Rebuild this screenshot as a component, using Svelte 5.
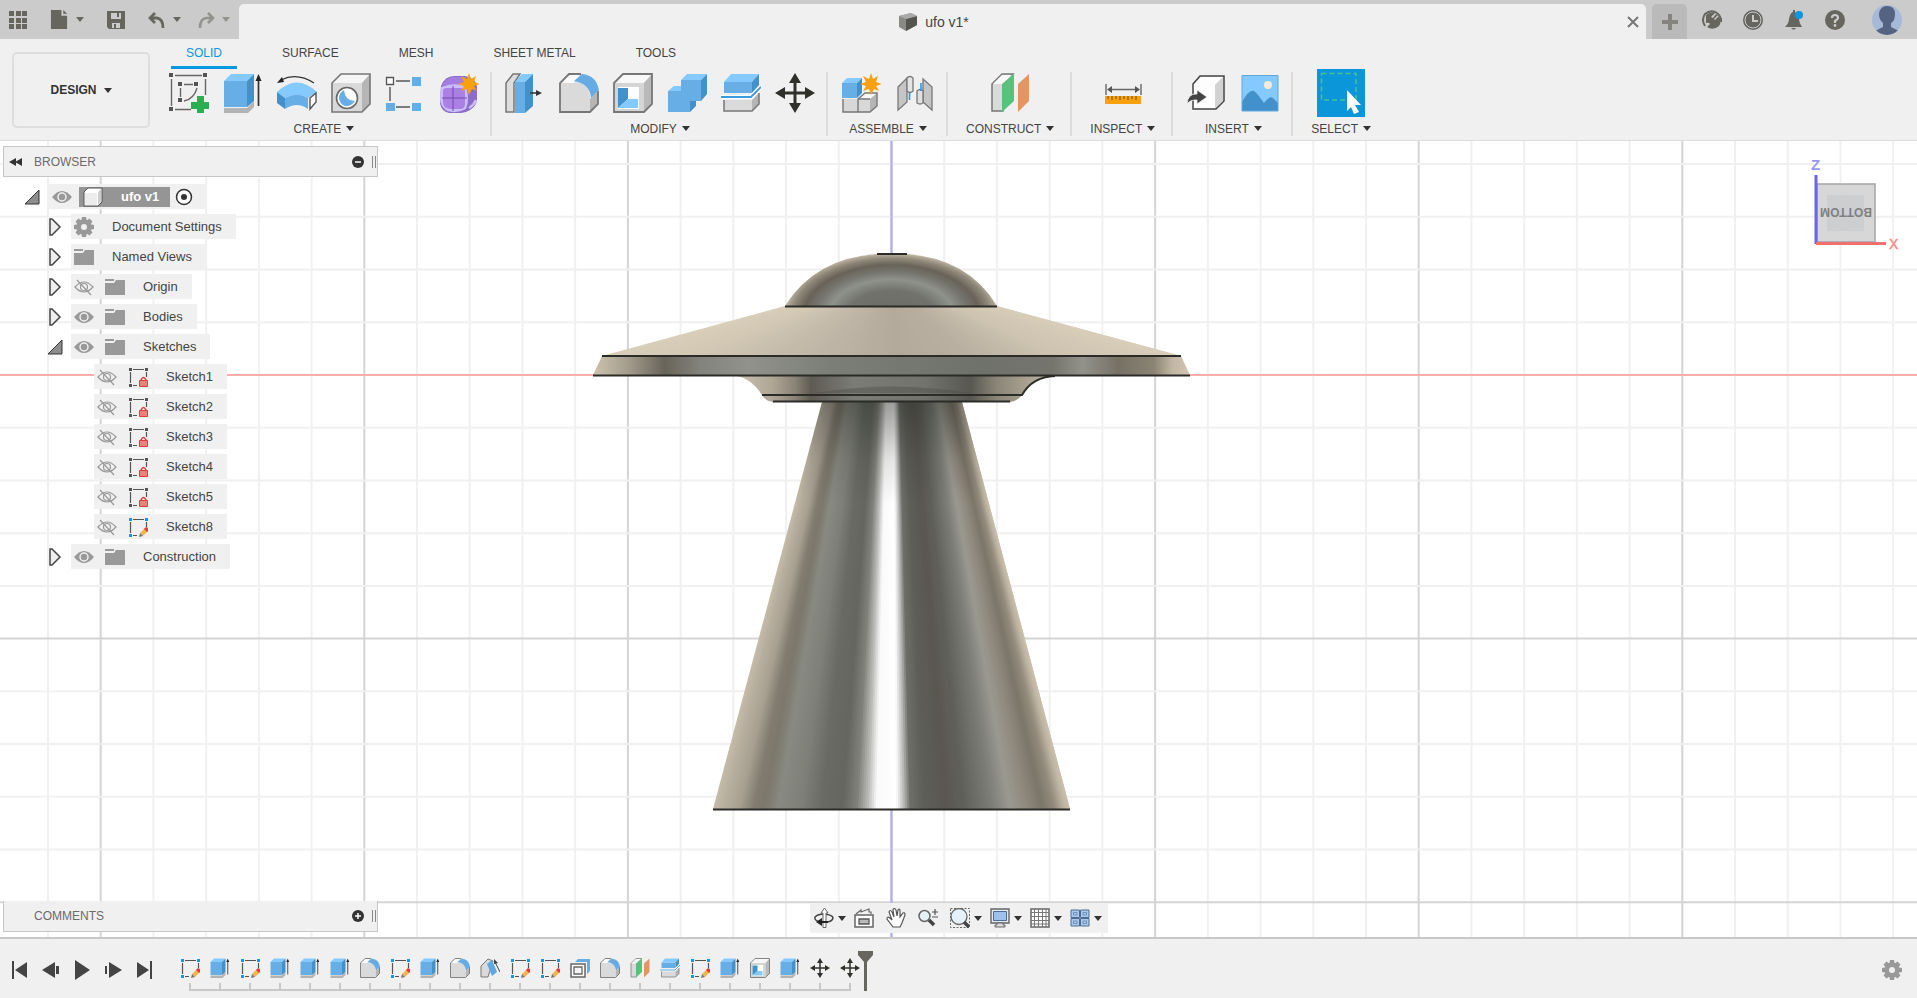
<script lang="ts">
	type Node = { label: string; depth: number; icon: string; open?: boolean; visible?: boolean };
	type Stop = [number, number, number, number];

	const tabs = ['SOLID', 'SURFACE', 'MESH', 'SHEET METAL', 'TOOLS'];
	let activeTab = $state('SOLID');

	const groups = [
		{ label: 'CREATE', tools: ['sketch', 'extrude', 'revolve', 'hole', 'pattern', 'form'] },
		{ label: 'MODIFY', tools: ['presspull', 'fillet', 'shell', 'combine', 'split', 'move'] },
		{ label: 'ASSEMBLE', tools: ['component', 'joint'] },
		{ label: 'CONSTRUCT', tools: ['plane'] },
		{ label: 'INSPECT', tools: ['measure'] },
		{ label: 'INSERT', tools: ['derive', 'canvas'] },
		{ label: 'SELECT', tools: ['select'] }
	];

	let nodes: Node[] = $state([
		{ label: 'Document Settings', depth: 1, icon: 'gear', open: false },
		{ label: 'Named Views', depth: 1, icon: 'folder', open: false },
		{ label: 'Origin', depth: 1, icon: 'folder', open: false, visible: false },
		{ label: 'Bodies', depth: 1, icon: 'folder', open: false, visible: true },
		{ label: 'Sketches', depth: 1, icon: 'folder', open: true, visible: true },
		{ label: 'Sketch1', depth: 2, icon: 'sketch-locked', visible: false },
		{ label: 'Sketch2', depth: 2, icon: 'sketch-locked', visible: false },
		{ label: 'Sketch3', depth: 2, icon: 'sketch-locked', visible: false },
		{ label: 'Sketch4', depth: 2, icon: 'sketch-locked', visible: false },
		{ label: 'Sketch5', depth: 2, icon: 'sketch-locked', visible: false },
		{ label: 'Sketch8', depth: 2, icon: 'sketch-edit', visible: false },
		{ label: 'Construction', depth: 1, icon: 'folder', open: false, visible: true }
	]);

	const features = [
		'sketch-edit', 'extrude', 'sketch-edit', 'extrude', 'extrude', 'extrude', 'fillet',
		'sketch-edit', 'extrude', 'fillet', 'draft', 'sketch-edit', 'sketch-edit', 'offset',
		'fillet', 'plane', 'split', 'sketch-edit', 'extrude', 'shell', 'extrude', 'move', 'move'
	];

	const player = ['first', 'prev', 'play', 'next', 'last'];

	const views = [
		{ id: 'orbit', menu: true },
		{ id: 'look', menu: false },
		{ id: 'pan', menu: false },
		{ id: 'zoom', menu: false },
		{ id: 'fit', menu: true },
		{ id: 'display', menu: true },
		{ id: 'grid', menu: true },
		{ id: 'viewports', menu: true }
	];

	// grid lines, every fifth one is major
	const cell = 52.72;
	const axisX = 891.5;
	const axisY = 375;
	const columns = Array.from({ length: 37 }, (_, i) => i - 17);
	const rows = Array.from({ length: 16 }, (_, i) => i - 5);

	// shading across each cone, left to right
	const beamStops: Stop[] = [
		[0, 196, 186, 168], [0.03, 182, 173, 158], [0.07, 168, 160, 146], [0.11, 130, 124, 112],
		[0.14, 124, 120, 108], [0.18, 136, 138, 130], [0.24, 127, 129, 121], [0.3, 105, 107, 100],
		[0.36, 101, 102, 96], [0.4, 128, 129, 122], [0.43, 185, 185, 184], [0.455, 250, 250, 250],
		[0.51, 255, 255, 255], [0.53, 190, 190, 190], [0.55, 109, 110, 104], [0.59, 94, 94, 89],
		[0.65, 90, 87, 81], [0.7, 96, 96, 91], [0.78, 124, 126, 119], [0.83, 154, 153, 146],
		[0.87, 145, 140, 127], [0.92, 123, 118, 105], [0.955, 148, 140, 126], [0.98, 188, 178, 160],
		[1, 205, 196, 176]
	];
	const discStops: Stop[] = [
		[0, 216, 206, 186], [0.15, 210, 200, 180], [0.35, 192, 183, 168], [0.5, 179, 170, 156],
		[0.62, 184, 175, 161], [0.78, 205, 195, 176], [1, 216, 206, 186]
	];

	function shade(stops: Stop[], t: number) {
		const i = Math.max(1, stops.findIndex((s) => s[0] >= t));
		const a = stops[i - 1];
		const b = stops[i];
		const k = (t - a[0]) / (b[0] - a[0]);
		const c = [1, 2, 3].map((n) => Math.round(a[n] + (b[n] - a[n]) * k));
		return `rgb(${c.join(',')})`;
	}

	// thin slices of a cone seen from the side; each one runs a little under the next
	function cone(stops: Stop[], top: number[], bottom: number[], count: number) {
		const at = (range: number[], t: number) => range[0] + (range[1] - range[0]) * t;
		return Array.from({ length: count }, (_, i) => {
			const t = i / count;
			const u = Math.min(1, (i + 2) / count);
			return {
				points: `${at(top, t)},${top[2]} ${at(top, u)},${top[2]} ${at(bottom, u)},${bottom[2]} ${at(bottom, t)},${bottom[2]}`,
				fill: shade(stops, t)
			};
		});
	}

	const beam = cone(beamStops, [822, 962, 402], [713, 1070, 809], 160);
	const disc = cone(discStops, [785, 997, 306], [602, 1181, 356], 100);
</script>

{#snippet icon(id: string, size: number)}
	<svg width={size} height={size} aria-hidden="true"><use href="#{id}" /></svg>
{/snippet}

{#snippet cube(front: string, top: string, side: string)}
	<path d="M1 10H31V39H1Z" fill={front} />
	<path d="M1 10L10 1H39L31 10Z" fill={top} />
	<path d="M31 10L39 1V31L31 39Z" fill={side} />
{/snippet}

{#snippet star()}
	<path d="M30 0l2 6 5-3-2 6 6 2-6 2 3 5-5-2-3 6-2-6-6 2 3-5-6-2 6-2-3-6 6 3z" fill="#f7a10d" />
{/snippet}

{#snippet frame()}
	<path d="M5 2.500H16M2.500 5V16M18.500 5V10M5 18.500H9" stroke="#555" stroke-width="1.200" fill="none" />
{/snippet}

<svg class="sprite" aria-hidden="true">
	<defs>
		<symbol id="sketch" viewBox="0 0 40 40">
			<path d="M6 2.500H33M2.500 6V33M6 36.500H22M36.500 6V22M15 11.500H24M11.500 15V24M28 15Q25 26 15 28" fill="none" stroke="#666" stroke-width="1.400" />
			<path d="M0 0h4v4H0zM34 0h4v4h-4zM0 34h4v4H0zM9 9h4v4H9zM25 9h4v4h-4zM9 25h4v4H9z" fill="#555" />
			<path d="M28 23h7v6h6v7h-6v5h-7v-5h-6v-7h6z" fill="#29ae52" />
		</symbol>
		<symbol id="extrude" viewBox="0 0 40 40">
			<path d="M1 35H24L31 28V34L25 40H1Z" fill="#b3b3b3" />
			<path d="M1 8H24V34H1Z" fill="#68aee6" />
			<path d="M1 8L8 1H31L24 8Z" fill="#84c9ff" />
			<path d="M24 8L31 1V28L24 34Z" fill="#4391cb" />
			<path d="M35.500 33V6" stroke="#333" stroke-width="1.700" />
			<path d="M35.500 1L38.500 8H32.500Z" fill="#222" />
		</symbol>
		<symbol id="revolve" viewBox="0 0 40 40">
			<path d="M0 19Q20 0 40 19L31 25Q20 18 8 25Z" fill="#84c9ff" />
			<path d="M8 25Q20 18 31 25V36Q20 28 8 36Z" fill="#68aee6" />
			<path d="M0 19L8 25V36L0 30Z" fill="#4391cb" />
			<path d="M33 25L39 20V29L33 36Z" fill="#fff" stroke="#555" stroke-width="1.400" />
			<path d="M37 10Q20-1 4 7" fill="none" stroke="#333" stroke-width="1.300" />
			<path d="M0 10L5 4L7 9Z" fill="#222" />
		</symbol>
		<symbol id="hole" viewBox="0 0 40 40">
			{@render cube('#d9d9d9', '#f5f5f5', '#b5b5b5')}
			<path d="M1 10L10 1H39V31L31 39H1Z" fill="none" stroke="#777" stroke-width="1.600" />
			<circle cx="16" cy="25" r="10.500" fill="#fff" stroke="#666" stroke-width="1.600" />
			<path d="M13 17Q14 28 24 28Q20 34 14 33Q8 31 8 24Q9 19 13 17Z" fill="#68aee6" />
		</symbol>
		<symbol id="pattern" viewBox="0 0 40 40">
			<path d="M11 8H25M11 34H25M5 14V28" stroke="#555" stroke-width="1.400" />
			<path d="M1.500 4.500h7v7h-7z" fill="#fff" stroke="#555" stroke-width="1.300" />
			<path d="M27 4h9v9h-9zM1 30h9v8H1zM27 30h9v8h-9z" fill="#65ade5" />
		</symbol>
		<symbol id="form" viewBox="0 0 40 40">
			<path d="M2 13Q6 3 15 3H26Q37 5 38 14V27Q37 35 27 39Q20 41 10 40Q2 38 1 30Z" fill="#8d6bc8" />
			<path d="M2 13Q7 5 14 4H27L23 12H7Z" fill="#a57de0" />
			<path d="M2 14Q14 9 27 13Q31 26 27 36Q18 41 8 38Q1 33 1 26Z" fill="#cbbcff" />
			<path d="M4 18Q4 15 8 15H22Q26 15 26 19V31Q26 36 21 36H11Q4 35 4 29Z" fill="#ab80e5" />
			<path d="M14 13V38M3 25H28" fill="none" stroke="#7548ae" />
			<path d="M30 35Q35 32 37 27" fill="none" stroke="#cbbcff" stroke-width="2.500" />
			{@render star()}
		</symbol>
		<symbol id="presspull" viewBox="0 0 40 40">
			<path d="M1 10L8 1H15L9 10V39H1Z" fill="#ddd" stroke="#777" stroke-width="1.500" />
			<path d="M10 9H20V40H10Z" fill="#68aee6" />
			<path d="M10 9L17 1H28L20 9Z" fill="#84c9ff" />
			<path d="M20 9L28 1V33L20 40Z" fill="#4391cb" />
			<path d="M25 20H33" stroke="#333" stroke-width="1.500" />
			<path d="M31 17L37 20L31 23Z" fill="#333" />
		</symbol>
		<symbol id="fillet" viewBox="0 0 40 40">
			<path d="M31 26L39 18V31L31 39Z" fill="#b5b5b5" />
			<path d="M1 10L10 1H23L16 9Q31 11 31 26V39H1Z" fill="#dadada" />
			<path d="M2 10L10 2H21L15 10Z" fill="#fafafa" />
			<path d="M22 1H10L1 10V39H31L39 31V18" fill="none" stroke="#777" stroke-width="1.800" />
			<path d="M15 8L23 1Q37 2 40 17L32 25Q31 11 15 8Z" fill="#66abe3" />
		</symbol>
		<symbol id="shell" viewBox="0 0 40 40">
			{@render cube('#d5d5d5', '#f8f8f8', '#b9b9b9')}
			<path d="M1 10L10 1H39V31L31 39H1Z" fill="none" stroke="#777" stroke-width="1.800" />
			<path d="M5 14H26V36H5Z" fill="#fff" />
			<path d="M5 15H15V26L5 35Z" fill="#4391cb" />
			<path d="M5 35L15 26H25V35Z" fill="#84c9ff" />
		</symbol>
		<symbol id="combine" viewBox="0 0 40 40">
			<path d="M1 18H14V7H34V28H23V39H1Z" fill="#68aee6" />
			<path d="M1 18L7 13H14V18ZM14 7L20 1H40L34 7Z" fill="#84c9ff" />
			<path d="M34 7L40 1V21L34 28ZM23 28H29V33L23 39Z" fill="#4391cb" />
		</symbol>
		<symbol id="split" viewBox="0 0 40 40">
			<path d="M3 9H31V20H3Z" fill="#68aee6" />
			<path d="M3 9L10 1H38L31 9Z" fill="#84c9ff" />
			<path d="M31 9L38 1V12L31 20Z" fill="#4391cb" />
			<path d="M3 27H31V38H3Z" fill="#dadada" />
			<path d="M31 27L38 20V31L31 38Z" fill="#b5b5b5" />
			<path d="M3 27V38H31L38 31V20" fill="none" stroke="#777" stroke-width="1.500" />
			<path d="M0 24H30L40 14" fill="none" stroke="#fff" stroke-width="4" />
			<path d="M0 24H30L40 14" fill="none" stroke="#3c9be0" stroke-width="1.800" />
		</symbol>
		<symbol id="move" viewBox="0 0 40 40">
			<path d="M20 5V35M5 20H35" stroke="#30302b" stroke-width="3" />
			<path d="M20 0L26 10H14ZM20 40L26 30H14ZM0 20L10 14V26ZM40 20L30 14V26Z" fill="#30302b" />
		</symbol>
		<symbol id="component" viewBox="0 0 40 40">
			<path d="M2 26H17V39H2ZM17 26H29V39H17Z" fill="#d8d8d8" />
			<path d="M17 26L23 20H36L29 26Z" fill="#f8f8f8" />
			<path d="M29 26L36 20V33L29 39Z" fill="#b5b5b5" />
			<path d="M2 26V39H29L36 33V20H24L17 26V39M17 26H29" fill="none" stroke="#777" stroke-width="1.400" />
			<path d="M1 10H16V25H1Z" fill="#68aee6" />
			<path d="M1 10L6 5H21L16 10Z" fill="#84c9ff" />
			<path d="M16 10L21 5V20L16 25Z" fill="#4391cb" />
			{@render star()}
		</symbol>
		<symbol id="joint" viewBox="0 0 40 40">
			<g stroke="#777" stroke-width="1.300">
				<path d="M3 14L12 5V29L3 37Z" fill="#c5c5c5" />
				<path d="M12 5Q15 2 18 5V18Q15 21 12 18Z" fill="#e5e5e5" />
				<path d="M28 6L37 14V37L28 29Z" fill="#c5c5c5" />
				<path d="M22 18Q25 15 28 18V30Q25 32 22 30Z" fill="#e0e0e0" />
			</g>
			<path d="M14.500 20V27M26 10V18" stroke="#2b98e0" stroke-width="1.600" />
		</symbol>
		<symbol id="plane" viewBox="0 0 40 40">
			<path d="M2 11L12 1H23L13 11V38H2Z" fill="#dadada" stroke="#777" stroke-width="1.500" />
			<path d="M3 11L12 2H22L13 11Z" fill="#f8f8f8" />
			<path d="M12 11L24 1V28L12 39Z" fill="#58c27d" />
			<path d="M28 11L39 1V28L28 39Z" fill="#e29762" />
		</symbol>
		<symbol id="measure" viewBox="0 0 40 40">
			<path d="M3 11V22M38 11V22M6 16.500H35" stroke="#666" stroke-width="1.400" />
			<path d="M4 16.500L9 13V20ZM37 16.500L32 13V20Z" fill="#555" />
			<path d="M2 23H38V31H2Z" fill="#f7a10d" />
			<path d="M5 23V26M9 23V27M13 23V26M17 23V27M21 23V26M25 23V27M29 23V26M33 23V27" stroke="#6c5320" />
		</symbol>
		<symbol id="derive" viewBox="0 0 40 40">
			<path d="M7 11L14 3H38V28L30 36H7Z" fill="#e5e5e5" stroke="#444" stroke-width="1.500" />
			<path d="M8 12L15 4H37L29 12V35H8Z" fill="#fdfdfd" />
			<path d="M29 12L37 4V28L29 35Z" fill="#d2d2d2" />
			<path d="M1 31Q2 20 11 21V17L21 24L11 31V27Q5 26 1 31Z" fill="#444" stroke="#f0f0f0" stroke-width=".8" />
		</symbol>
		<symbol id="canvas" viewBox="0 0 40 40">
			<path d="M2 2.500H38V38H2Z" fill="#84c9ff" />
			<path d="M2 29Q9 16 14 18Q17 20 24 30Q30 22 33 25L38 30V38H2Z" fill="#4391cb" />
			<circle cx="28" cy="12" r="4" fill="#f7ead9" />
			<path d="M2 2.500H38V38H2Z" fill="none" stroke="#5fa7dd" />
		</symbol>
		<symbol id="select" viewBox="0 0 48 48">
			<path d="M0 0H48V48H0Z" fill="#0a96d8" />
			<path d="M4.500 4.500H39V31H4.500Z" fill="none" stroke="#4ac192" stroke-width="1.500" stroke-dasharray="5 3" />
			<path d="M30 21L44 36H38L42 43L37 45L34 38L30 42Z" fill="#fff" />
		</symbol>

		<symbol id="sketch-edit" viewBox="0 0 20 20">
			{@render frame()}
			<path d="M1 1h3v3H1zM17 1h3v3h-3zM1 17h3v3H1z" fill="#1b95df" />
			<path d="M12 16L17 11L20 14L15 19Z" fill="#f6b54a" />
			<path d="M16 12L18 10L20 11V14L19 15Z" fill="#e23b3b" />
			<path d="M11 20L12 16L15 19Z" fill="#777" />
		</symbol>
		<symbol id="sketch-locked" viewBox="0 0 20 20">
			{@render frame()}
			<path d="M1 1h3v3H1zM17 1h3v3h-3zM1 17h3v3H1z" fill="#555" />
			<path d="M13 14V13Q15.500 8 18 13V14" fill="none" stroke="#db3c3c" stroke-width="1.500" />
			<path d="M11.500 13.500H19.500V19.500H11.500Z" fill="#ef8080" stroke="#db3c3c" />
		</symbol>
		<symbol id="draft" viewBox="0 0 20 20">
			<path d="M1 8L8 1L13 3L8 19H1Z" fill="#dadada" stroke="#777" />
			<path d="M7 6L12 2L17 14L12 18Z" fill="#5da8e1" />
			<path d="M15 4L20 14" stroke="#444" />
			<path d="M14 1L18 5L14 6Z" fill="#444" />
		</symbol>
		<symbol id="offset" viewBox="0 0 20 20">
			<path d="M5 4L8 1H20V13L17 16V4Z" fill="#68aee6" />
			<path d="M1 6H15V19H1Z" fill="#fff" stroke="#666" stroke-width="1.500" />
			<path d="M4 9H12V16H4Z" fill="#f5f5f5" stroke="#666" stroke-width="1.300" />
		</symbol>
		<symbol id="eye" viewBox="0 0 20 20">
			<path d="M0 10Q10-2 20 10Q10 22 0 10Z" fill="#999" />
			<circle cx="10" cy="10" r="4" fill="#999" stroke="#f0f0f0" stroke-width="1.500" />
		</symbol>
		<symbol id="eye-off" viewBox="0 0 20 20">
			<g fill="none" stroke="#999" stroke-width="1.200">
				<path d="M1 10Q10 0 19 10Q10 20 1 10Z" />
				<circle cx="10" cy="10" r="3.500" />
				<path d="M3 3L17 18" />
			</g>
		</symbol>
		<symbol id="folder" viewBox="0 0 20 20">
			<path d="M0 2H9V4H0ZM0 6H9L11 3H20V18H0Z" fill="#999" />
		</symbol>
		<symbol id="gear" viewBox="0 0 20 20">
			<circle cx="10" cy="10" r="5.200" fill="none" stroke="#999" stroke-width="4.400" />
			<path d="M8 0H12L13 5H7ZM8 20H12L13 15H7ZM0 8V12L5 13V7ZM20 8V12L15 13V7ZM1.500 4.500L4.500 1.500L8 4L4 8ZM15.500 1.500L18.500 4.500L16 8L12 4ZM1.500 15.500L4.500 18.500L8 16L4 12ZM15.500 18.500L18.500 15.500L16 12L12 16Z" fill="#999" />
		</symbol>
		<symbol id="body" viewBox="0 0 20 20">
			<path d="M1 5L5 1H19V15L15 19H1Z" fill="#fff" stroke="#555" />
			<path d="M15 5L18 2V15L15 18Z" fill="#ccc" />
			<path d="M2 6H14V18H2Z" fill="#ececec" />
		</symbol>
		<symbol id="closed" viewBox="0 0 18 18">
			<path d="M4 1H6L14 9L6 17H4Z" fill="#eee" stroke="#444" stroke-width="1.500" />
		</symbol>
		<symbol id="opened" viewBox="0 0 18 18">
			<path d="M16 2V16H2Z" fill="#8d8d8d" stroke="#333" />
		</symbol>

		<symbol id="first" viewBox="0 0 20 20">
			<path d="M2 1H4V19H2ZM17 2V18L5 10Z" fill="#444" />
		</symbol>
		<symbol id="prev" viewBox="0 0 20 20">
			<path d="M14 2V18L1 10ZM15 6H18V14H15Z" fill="#444" />
		</symbol>
		<symbol id="play" viewBox="0 0 20 20">
			<path d="M3 0V20L18 10Z" fill="#444" />
		</symbol>
		<symbol id="next" viewBox="0 0 20 20">
			<path d="M6 2V18L19 10ZM2 6H4V14H2Z" fill="#444" />
		</symbol>
		<symbol id="last" viewBox="0 0 20 20">
			<path d="M3 2V18L15 10ZM16 1H18V19H16Z" fill="#444" />
		</symbol>

		<symbol id="orbit" viewBox="0 0 20 20">
			<path d="M7 14Q0 13 1 9Q4 6 10 6Q19 7 19 10Q18 14 12 14" fill="none" stroke="#444" stroke-width="1.500" />
			<path d="M9 19.500V5H7L10.500 0L14 5H12V19.500Z" fill="#fff" stroke="#666" />
			<path d="M2 14L8 10V18ZM8 13H14V15H8Z" fill="#222" />
		</symbol>
		<symbol id="look" viewBox="0 0 20 20">
			<path d="M1 7H19V19H1Z" fill="#fff" stroke="#666" stroke-width="1.500" />
			<path d="M5 11H15V16H5Z" fill="#bbb" stroke="#555" stroke-width="1.300" />
			<path d="M2 6L7 2V4L15 1V4H17V6" fill="none" stroke="#666" stroke-width="1.200" />
		</symbol>
		<symbol id="pan" viewBox="0 0 20 20">
			<path d="M7 19L1 11Q1 8 4 10L6 12L3 4Q4 1 6 4L8 9L7 2Q8-1 10 2L11 8L12 2Q14 0 14 3V9L17 5Q19 4 19 7L16 15L14 19Z" fill="#fff" stroke="#555" stroke-width="1.200" />
		</symbol>
		<symbol id="zoom" viewBox="0 0 20 20">
			<circle cx="6.500" cy="8" r="5.500" fill="#e4f1f8" stroke="#666" stroke-width="1.500" />
			<path d="M11 12L16 17" stroke="#444" stroke-width="3.500" />
			<path d="M14 4H20M17 1V7M14 9H20" stroke="#555" stroke-width="1.200" />
		</symbol>
		<symbol id="fit" viewBox="0 0 20 20">
			<path d="M.500 .500H19.500V19.500H.500Z" fill="none" stroke="#666" stroke-dasharray="2 1.500" />
			<circle cx="9" cy="8.500" r="8" fill="#e4f1f8" stroke="#666" stroke-width="1.300" />
			<path d="M14 14L19 19" stroke="#444" stroke-width="3.500" />
		</symbol>
		<symbol id="display" viewBox="0 0 20 20">
			<path d="M1 1H19V15H1Z" fill="#e8e8e8" stroke="#666" stroke-width="1.400" />
			<path d="M3.500 3.500H16.500V12.500H3.500Z" fill="#9dc1ec" stroke="#4a6f9d" />
			<path d="M7 15H13V17H15V19H5V17H7Z" fill="#ddd" stroke="#666" />
		</symbol>
		<symbol id="grid" viewBox="0 0 20 20">
			<path d="M1 1H19V19H1Z" fill="#fff" stroke="#666" stroke-width="1.500" />
			<path d="M4.500 1V19M8.500 1V19M12.500 1V19M16 1V19M1 4.500H19M1 8.500H19M1 12.500H19M1 16H19" stroke="#777" />
		</symbol>
		<symbol id="viewports" viewBox="0 0 20 20">
			<path d="M1 2H9.500V9.500H1ZM10.500 2H19V9.500H10.500ZM1 10.500H9.500V18H1ZM10.500 10.500H19V18H10.500Z" fill="#a9c8ea" stroke="#4f6c92" />
			<path d="M3.500 4.500H7V7H3.500ZM13 4.500H16.500V7H13ZM3.500 13H7V15.500H3.500ZM13 13H16.500V15.500H13Z" fill="none" stroke="#6d93c2" />
		</symbol>

		<symbol id="apps" viewBox="0 0 18 18">
			<path d="M0 0h5v5H0zM7 0h5v5H7zM13 0h5v5h-5zM0 7h5v5H0zM7 7h5v5H7zM13 7h5v5h-5zM0 13h5v5H0zM7 13h5v5H7zM13 13h5v5h-5z" fill="#66665f" />
		</symbol>
		<symbol id="file" viewBox="0 0 18 20">
			<path d="M0 0H11V6H17V20H0Z M13 0L17 4H13Z" fill="#66665f" />
		</symbol>
		<symbol id="save" viewBox="0 0 18 18">
			<path d="M0 0H18V18H2L0 16Z" fill="#66665f" />
			<path d="M4 2H14V8H4ZM5 12H13V17H5Z" fill="#cbcbcb" />
			<path d="M10 2H12V6H10ZM7 13H9V17H7Z" fill="#66665f" />
		</symbol>
		<symbol id="undo" viewBox="0 0 18 18">
			<path d="M7 2L2 7L7 12M2 7H9Q15 8 15 17" fill="none" stroke="#66665f" stroke-width="2.800" />
		</symbol>
		<symbol id="redo" viewBox="0 0 18 18">
			<path d="M11 2L16 7L11 12M16 7H9Q3 8 3 17" fill="none" stroke="#93938e" stroke-width="2.600" />
		</symbol>
		<symbol id="doc" viewBox="0 0 20 20">
			<path d="M1 4L13 1L19 4V13L8 19L1 15Z" fill="#8a8a85" />
			<path d="M8 7L19 4V13L8 19Z" fill="#55554f" />
			<path d="M1 4L13 1L19 4L8 7Z" fill="#aaa" />
		</symbol>
		<symbol id="close" viewBox="0 0 18 18">
			<path d="M4 4L14 14M14 4L4 14" stroke="#777" stroke-width="2" />
		</symbol>
		<symbol id="plus" viewBox="0 0 18 18">
			<path d="M7 1h4v6h6v4h-6v6H7v-6H1V7h6z" fill="#85857e" />
		</symbol>
		<symbol id="extensions" viewBox="0 0 20 20">
			<path d="M3 16Q-1 10 3 4Q9-1 15 3" fill="none" stroke="#66665f" stroke-width="2" />
			<path d="M4 5Q9 1 13 3L9 7L11 8L14 4L16 5L12 9L13 10L17 6Q20 12 17 16Q11 21 5 17L8 14Q7 12 4 13Z" fill="#66665f" />
			<path d="M15 3Q20 7 19 12" fill="none" stroke="#66665f" stroke-width="2" />
		</symbol>
		<symbol id="clock" viewBox="0 0 20 20">
			<circle cx="10" cy="10" r="9" fill="#66665f" stroke="#66665f" stroke-width="2" />
			<circle cx="10" cy="10" r="8" fill="none" stroke="#cbcbcb" />
			<path d="M10 5V11H15" fill="none" stroke="#cbcbcb" stroke-width="2" />
		</symbol>
		<symbol id="bell" viewBox="0 0 20 20">
			<path d="M1 17Q5 13 5 9Q6 3 9 2V0H11V2Q14 4 15 9Q15 13 18 17ZM7 18H12Q10 21 7 18Z" fill="#66665f" />
			<circle cx="15" cy="5" r="4" fill="#0a96e0" />
		</symbol>
		<symbol id="help" viewBox="0 0 20 20">
			<circle cx="10" cy="10" r="10" fill="#66665f" />
			<path d="M7 8Q7 5 10 5Q13 5 13 8Q13 9 10 11V13" fill="none" stroke="#cbcbcb" stroke-width="2.200" />
			<circle cx="10" cy="15.500" r="1.400" fill="#cbcbcb" />
		</symbol>
		<symbol id="avatar" viewBox="0 0 30 30">
			<clipPath id="round"><circle cx="15" cy="15" r="15" /></clipPath>
			<g clip-path="url(#round)">
				<path d="M0 0H30V30H0Z" fill="#a6b9d9" />
				<path d="M7 9Q8 1 15 1Q23 1 23 9Q23 16 19 18V22L27 26V30H3V26L11 22V18Q7 15 7 9Z" fill="#566282" />
			</g>
		</symbol>
	</defs>
</svg>

<div class="app">
	<header class="titlebar">
		<div class="quick">
			<button aria-label="Data panel">{@render icon('apps', 18)}</button>
			<button class="pair" aria-label="File">{@render icon('file', 19)}<i class="caret"></i></button>
			<button aria-label="Save">{@render icon('save', 18)}</button>
			<div class="history">
				<button class="pair" aria-label="Undo">{@render icon('undo', 18)}<i class="caret"></i></button>
				<button class="pair off" aria-label="Redo">{@render icon('redo', 18)}<i class="caret"></i></button>
			</div>
		</div>
		<div class="document">
			<div class="name">{@render icon('doc', 20)}<span>ufo v1*</span></div>
			<button aria-label="Close document">{@render icon('close', 18)}</button>
		</div>
		<div class="account">
			<button class="new" aria-label="New design">{@render icon('plus', 18)}</button>
			{#each ['extensions', 'clock', 'bell', 'help'] as id}
				<button aria-label={id}>{@render icon(id, 20)}</button>
			{/each}
			<button class="avatar" aria-label="Account">{@render icon('avatar', 30)}</button>
		</div>
	</header>

	<div class="toolbar">
		<button class="workspace">DESIGN<i class="caret"></i></button>
		<div class="ribbon">
			<nav>
				{#each tabs as tab}
					<button class:active={tab === activeTab} onclick={() => (activeTab = tab)}>{tab}</button>
				{/each}
			</nav>
			<div class="groups">
				{#each groups as group}
					<section>
						<div class="tools">
							{#each group.tools as tool}
								<button aria-label={tool}>{@render icon(tool, tool === 'select' ? 48 : 40)}</button>
							{/each}
						</div>
						<button class="menu">{group.label}<i class="caret"></i></button>
					</section>
				{/each}
			</div>
		</div>
	</div>

	<main>
		<svg class="scene" viewBox="0 141 1917 796" preserveAspectRatio="xMidYMid slice" role="img" aria-label="ufo v1">
			<defs>
				<linearGradient id="rim">
					<stop offset="0" stop-color="#cdc3af" />
					<stop offset=".06" stop-color="#a39b8c" />
					<stop offset=".12" stop-color="#68645a" />
					<stop offset=".18" stop-color="#82837c" />
					<stop offset=".26" stop-color="#90928b" />
					<stop offset=".4" stop-color="#7b7e77" />
					<stop offset=".65" stop-color="#6f716b" />
					<stop offset=".77" stop-color="#75756e" />
					<stop offset=".82" stop-color="#92928b" />
					<stop offset=".88" stop-color="#767164" />
					<stop offset=".94" stop-color="#8b8475" />
					<stop offset=".97" stop-color="#c1b6a2" />
					<stop offset="1" stop-color="#d1c6b2" />
				</linearGradient>
				<linearGradient id="neck">
					<stop offset="0" stop-color="#d0c6b3" />
					<stop offset=".13" stop-color="#b0a696" />
					<stop offset=".2" stop-color="#8a8376" />
					<stop offset=".25" stop-color="#5e5b53" />
					<stop offset=".38" stop-color="#7b7c76" />
					<stop offset=".6" stop-color="#72736d" />
					<stop offset=".74" stop-color="#585851" />
					<stop offset=".82" stop-color="#8b8578" />
					<stop offset="1" stop-color="#c5baa6" />
				</linearGradient>
				<radialGradient id="dome" gradientUnits="userSpaceOnUse" cx="0" cy="0" r="1" gradientTransform="translate(891.5 316) scale(110 64)">
					<stop offset="0" stop-color="#6c6b65" />
					<stop offset=".4" stop-color="#71726c" />
					<stop offset=".57" stop-color="#8f918b" />
					<stop offset=".7" stop-color="#74746d" />
					<stop offset=".8" stop-color="#686358" />
					<stop offset=".9" stop-color="#8f887a" />
					<stop offset="1" stop-color="#cdc3ad" />
				</radialGradient>
				<linearGradient id="shadow" x2="0" y2="1">
					<stop offset="0" stop-color="#252822" stop-opacity=".45" />
					<stop offset=".14" stop-color="#252822" stop-opacity=".12" />
					<stop offset=".25" stop-color="#252822" stop-opacity="0" />
				</linearGradient>
			</defs>

			{#each [...columns].sort((a, b) => Number(a % 5 === 0) - Number(b % 5 === 0)) as n}
				<line class:major={n % 5 === 0} x1={axisX + n * cell} x2={axisX + n * cell} y1="0" y2="1100" />
			{/each}
			{#each rows as n}
				<line class:major={n % 5 === 0} x1="-100" x2="2017" y1={axisY + n * cell} y2={axisY + n * cell} />
			{/each}
			<line class="x-axis" x1="-100" x2="2017" y1={axisY} y2={axisY} />
			<line class="z-axis" x1={axisX} x2={axisX} y1="0" y2="1100" />

			{#each beam as slice}
				<polygon points={slice.points} fill={slice.fill} />
			{/each}
			<polygon points="822,402 962,402 1070,809 713,809" fill="url(#shadow)" />
			<path class="edge" d="M713 809.500H1070" />

			<path d="M730 375Q750 376 762 395Q765 401 773 402H1010Q1018 401 1022 395Q1032 377 1055 375Z" fill="url(#neck)" />
			<path d="M815 393Q891 380 970 393Z" fill="#4b4b45" opacity=".4" />
			<path class="edge" d="M762 395H1022Q1032 377 1055 376M773 401.500H1010" />
			{#each disc as slice}
				<polygon points={slice.points} fill={slice.fill} />
			{/each}
			<path d="M602 356L593 375H1190L1181 356Z" fill="url(#rim)" />
			<path class="edge" d="M602 356H1181M593 375.500H1190" />
			<path d="M785 306Q815 258 877 254H906Q968 258 997 306Z" fill="url(#dome)" />
			<path class="edge" d="M785 306.500H997M877 254H907" />
		</svg>

		<aside>
			<div class="panel">
				<svg width="14" height="10" aria-hidden="true"><path d="M7 1V9L0 5ZM13 1V9L6 5Z" fill="#333" /></svg>
				<h2>BROWSER</h2>
				<button aria-label="Collapse browser"><svg width="12" height="12"><circle cx="6" cy="6" r="6" fill="#333" /><path d="M3 6H9" stroke="#fff" stroke-width="1.500" /></svg></button>
				<i class="grip"></i>
			</div>
			<ul class="tree">
				<li class="root">
					{@render icon('opened', 18)}
					<div class="row">
						{@render icon('eye', 20)}
						<b>{@render icon('body', 20)}<span>ufo v1</span></b>
						<svg width="18" height="18" aria-hidden="true"><circle cx="9" cy="9" r="7.500" fill="#fff" stroke="#333" stroke-width="1.500" /><circle cx="9" cy="9" r="3" fill="#333" /></svg>
					</div>
				</li>
				{#each nodes as node}
					<li class:leaf={node.depth === 2}>
						{#if node.depth === 1}
							<button aria-label="Expand {node.label}" onclick={() => (node.open = !node.open)}>
								{@render icon(node.open ? 'opened' : 'closed', 18)}
							</button>
						{/if}
						<div class="row">
							{#if node.visible !== undefined}
								<button class="eye" aria-label="Show {node.label}" onclick={() => (node.visible = !node.visible)}>
									{@render icon(node.visible ? 'eye' : 'eye-off', 20)}
								</button>
							{/if}
							{@render icon(node.icon, 20)}
							<span>{node.label}</span>
						</div>
					</li>
				{/each}
			</ul>
			<div class="panel comments">
				<h2>COMMENTS</h2>
				<button aria-label="Expand comments"><svg width="12" height="12"><circle cx="6" cy="6" r="6" fill="#333" /><path d="M3 6H9M6 3V9" stroke="#fff" stroke-width="1.500" /></svg></button>
				<i class="grip"></i>
			</div>
		</aside>

		<svg class="viewcube" width="100" height="100" role="img" aria-label="View cube">
			<path d="M10 31H68V89H10Z" fill="#d3d3d3" fill-opacity=".9" stroke="#a5a5a5" stroke-width="1.500" />
			<path d="M20 42H57V78H20Z" fill="#c9cbcd" fill-opacity=".7" />
			<text x="39" y="60" transform="rotate(180 39 60)" text-anchor="middle" dy="5" fill="#808080" font-size="12" font-weight="bold">BOTTOM</text>
			<path d="M9 22V91" stroke="#6a66ee" stroke-width="3" />
			<path d="M9 90.500H79" stroke="#f07070" stroke-width="3" />
			<text x="4" y="17" fill="#9a96ff" font-size="15" font-weight="bold">Z</text>
			<text x="82" y="96" fill="#ff8c8c" font-size="14" stroke="#ff8c8c" stroke-width=".5">X</text>
		</svg>

		<div class="views">
			{#each views as view}
				<button class:menu={view.menu} aria-label={view.id}>
					{@render icon(view.id, 20)}
					{#if view.menu}<i class="caret"></i>{/if}
				</button>
			{/each}
		</div>
	</main>

	<footer>
		<div class="player">
			{#each player as id}
				<button aria-label={id}>{@render icon(id, 20)}</button>
			{/each}
		</div>
		<ol>
			{#each features as feature}
				<li>{@render icon(feature, 20)}</li>
			{/each}
		</ol>
		<svg class="marker" width="16" height="40" aria-hidden="true"><path d="M0 0H15V4L9 11V40H6V11L0 4Z" fill="#66665f" /></svg>
		<button class="settings" aria-label="Settings">{@render icon('gear', 20)}</button>
	</footer>
</div>

<style>
	:global(body) {
		margin: 0;
	}
	.sprite {
		position: absolute;
		width: 0;
		height: 0;
	}
	.app {
		min-height: 100vh;
		display: flex;
		flex-direction: column;
		background: #f0f0f0;
		color: #444;
		font-family: "Liberation Sans", Arial, sans-serif;
		font-size: 12px;
	}
	svg {
		display: block;
		flex: none;
	}
	button {
		display: flex;
		align-items: center;
		justify-content: center;
		padding: 0;
		border: none;
		background: none;
		color: inherit;
		font: inherit;
		cursor: pointer;
	}
	.caret {
		border: 4px solid transparent;
		border-top: 5px solid #333;
		border-bottom: 0;
	}

	/* title bar */
	.titlebar {
		display: flex;
		height: 39px;
		background: #cbcbcb;
	}
	.quick {
		box-sizing: border-box;
		width: 239px;
		display: flex;
		align-items: center;
		gap: 23px;
		padding-left: 9px;
	}
	.quick .caret {
		border-top-color: #66665f;
	}
	.quick .off .caret {
		border-top-color: #93938e;
	}
	.pair {
		gap: 7px;
	}
	.history {
		display: flex;
		gap: 16px;
	}
	.document {
		flex: 1;
		display: flex;
		align-items: center;
		margin-top: 4px;
		padding-right: 4px;
		background: #f0f0f0;
		border-radius: 5px 5px 0 0;
		font-size: 14px;
	}
	.document .name {
		flex: 1;
		display: flex;
		justify-content: center;
		align-items: center;
		gap: 7px;
		padding-left: 4px;
	}
	.account {
		display: flex;
		align-items: center;
		gap: 21px;
		padding: 0 15px 0 6px;
	}
	.new {
		align-self: stretch;
		width: 35px;
		margin: 4px -6px 0 0;
		border-radius: 5px 5px 0 0;
		background: #bababa;
	}
	.avatar {
		margin-left: 6px;
	}

	/* toolbar */
	.toolbar {
		display: flex;
		border-bottom: 1px solid #dcdcdc;
	}
	.workspace {
		width: 138px;
		margin: 13px 6px 12px 12px;
		gap: 7px;
		border: 2px solid #dedede;
		border-radius: 5px;
		font-weight: bold;
		color: #333;
	}
	nav {
		display: flex;
		gap: 30px;
		margin-left: 15px;
	}
	nav button {
		box-sizing: border-box;
		height: 30px;
		padding: 0 15px;
		border-bottom: 3px solid transparent;
	}
	nav .active {
		border-color: #0a96e0;
		color: #0a96e0;
	}
	.groups {
		display: flex;
	}
	section {
		display: flex;
		flex-direction: column;
		align-items: center;
		padding: 0 6px;
		background: linear-gradient(#dcdcdc, #dcdcdc) right 3px / 2px 64px no-repeat;
	}
	section:last-child {
		background: none;
	}
	.tools {
		display: flex;
		height: 48px;
	}
	.tools button {
		width: 54px;
	}
	section .menu {
		height: 23px;
		padding: 0 12px;
		gap: 5px;
	}

	/* canvas */
	main {
		position: relative;
		flex: 1;
		display: flex;
		justify-content: space-between;
		background: #fff;
		overflow: hidden;
	}
	.scene {
		position: absolute;
		inset: 0;
		width: 100%;
		height: 100%;
	}
	line {
		stroke: #f0f0f0;
		stroke-width: 2;
	}
	.major {
		stroke: #d4d4d4;
	}
	.x-axis {
		stroke: #ffabab;
	}
	.z-axis {
		stroke: #aca9fb;
	}
	.edge {
		fill: none;
		stroke: #2b2b28;
		stroke-width: 2;
	}
	aside {
		position: relative;
		width: 375px;
		display: flex;
		flex-direction: column;
		margin: 5px 0 5px 3px;
	}
	.panel {
		box-sizing: border-box;
		height: 31px;
		display: flex;
		align-items: center;
		padding: 0 1px 0 5px;
		border: 1px solid #c6c6c6;
		background: #f0f0f0;
	}
	.panel h2 {
		flex: 1;
		margin: 0 0 0 11px;
		font-size: 12px;
		font-weight: normal;
		color: #6b6b6b;
	}
	.comments {
		margin-top: auto;
		border-top: none;
	}
	.comments h2 {
		margin-left: 25px;
	}
	.grip {
		width: 2px;
		height: 12px;
		margin-left: 8px;
		border: solid #888;
		border-width: 0 1px;
	}
	.tree {
		display: flex;
		flex-direction: column;
		gap: 5px;
		margin: 7px 0;
		padding: 0;
		list-style: none;
		font-size: 13px;
	}
	.tree li {
		display: flex;
		align-items: center;
		gap: 7px;
		height: 25px;
		padding-left: 43px;
	}
	.tree .root {
		padding-left: 20px;
	}
	.tree .leaf {
		padding-left: 91px;
	}
	.row {
		display: flex;
		align-items: center;
		height: 25px;
		padding: 0 14px 0 3px;
		background: #f0f0f0;
	}
	.row .eye {
		margin-right: 11px;
	}
	.row span {
		margin-left: 18px;
	}
	.root .row {
		padding-left: 4px;
	}
	.root b {
		display: flex;
		align-items: center;
		height: 20px;
		margin: 0 5px 0 7px;
		padding: 0 11px 0 4px;
		background: #959595;
		color: #fff;
	}
	.viewcube {
		position: relative;
		margin: 12px 10px 0 0;
	}
	.views {
		position: absolute;
		bottom: 4px;
		left: 50%;
		transform: translateX(-50%);
		display: flex;
		gap: 12px;
		height: 30px;
		padding: 0 6px 0 4px;
		background: #f0f0f0;
	}
	.views .menu {
		gap: 4px;
		margin-right: -4px;
	}
	.views .menu:last-child {
		margin-right: 0;
	}

	/* timeline */
	footer {
		box-sizing: border-box;
		height: 61px;
		display: flex;
		align-items: flex-start;
		border-top: 2px solid #c8c8c8;
	}
	.player {
		display: flex;
		gap: 11px;
		margin: 21px 21px 0 10px;
	}
	ol {
		display: flex;
		margin: 0;
		padding: 19px 0 0;
		list-style: none;
	}
	ol li {
		width: 30px;
		height: 33px;
		display: flex;
		flex-direction: column;
		align-items: center;
		gap: 5px;
		background: linear-gradient(#c8c8c8, #c8c8c8) bottom / 100% 2px no-repeat;
	}
	ol li::after {
		content: '';
		width: 2px;
		height: 8px;
		background: #c8c8c8;
	}
	ol li:first-child {
		background-position: right bottom;
		background-size: 50% 2px;
	}
	ol li:last-child {
		background-position: left bottom;
		background-size: 50% 2px;
	}
	.marker {
		margin: 12px 0 0 -7px;
	}
	.settings {
		margin: 21px 15px 0 auto;
	}
</style>
